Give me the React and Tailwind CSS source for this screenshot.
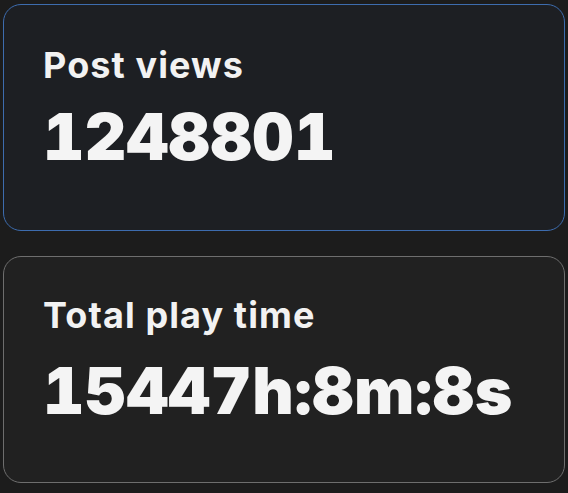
export default function App() {
  return (
    <div className="w-[568px] h-[493px] bg-[#1c1c1c] px-[3px] pt-[4px] flex flex-col gap-[25px]" style={{ fontFamily: 'Inter, "Noto Sans", sans-serif' }}>
      <div className="h-[227px] rounded-[18px] border-[1.5px] border-[#3d6cae] bg-[#1d1f23] pl-[39px] pt-[38px] flex flex-col">
        <div className="text-[36px] font-bold leading-[44px] tracking-[1.1px] text-[#f2f2f2]">Post views</div>
        <div className="mt-[11px] text-[64px] font-black leading-[77px] tracking-[0.6px] tabular-nums text-[#f4f4f4]">1248801</div>
      </div>
      <div className="h-[227px] rounded-[18px] border-[1.5px] border-[#6e6e6e] bg-[#212121] pl-[39px] pt-[36px] flex flex-col">
        <div className="text-[36px] font-bold leading-[44px] tracking-[1.1px] text-[#f2f2f2]">Total play time</div>
        <div className="mt-[15px] text-[64px] font-black leading-[77px] tracking-[0.6px] tabular-nums text-[#f4f4f4]">15447h:8m:8s</div>
      </div>
    </div>
  );
}
